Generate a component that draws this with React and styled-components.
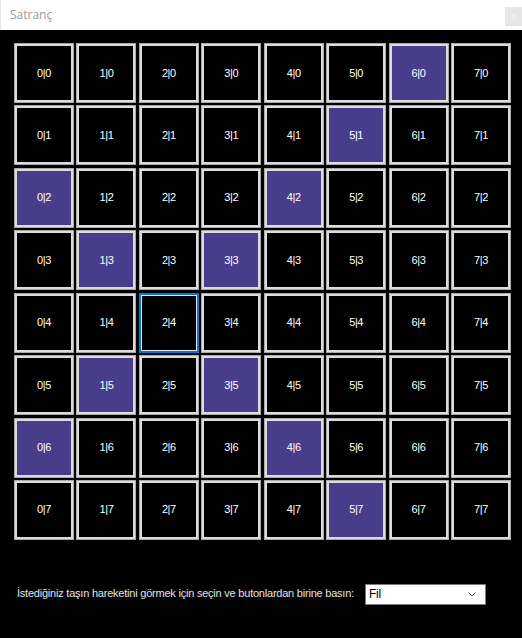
import React from "react";
import styled, { createGlobalStyle } from "styled-components";

const Global = createGlobalStyle`
  html, body { margin: 0; padding: 0; background: #000; }
  body { width: 522px; height: 638px; overflow: hidden; }
`;

const Window = styled.div`
  width: 522px;
  height: 638px;
  display: flex;
  flex-direction: column;
  background: #000;
`;

const TitleBar = styled.div`
  height: 30px;
  flex: none;
  background: #fff;
  display: flex;
  align-items: center;
  justify-content: space-between;
  padding-left: 9px;
  box-sizing: border-box;
  border-left: 1px solid #e8e8e8;
`;

const Title = styled.span`
  font-family: "Open Sans", "Noto Sans", sans-serif;
  font-size: 12px;
  color: #9a9a9a;
  margin-top: -1px;
`;

const CloseBox = styled.div`
  width: 17px;
  height: 19px;
  background: #e6e6e6;
  color: #f4f4f4;
  font-family: "Liberation Sans", sans-serif;
  font-size: 10px;
  display: flex;
  align-items: center;
  justify-content: center;
  align-self: flex-start;
  margin-top: 7px;
`;

const Content = styled.div`
  flex: 1;
  padding: 13px 0 0 14px;
  display: flex;
  flex-direction: column;
`;

const Board = styled.div`
  width: 497px;
  display: grid;
  grid-template-columns: repeat(8, 60px);
  grid-auto-rows: 60px;
  column-gap: 2.43px;
  row-gap: 2.43px;
`;

const Cell = styled.div`
  box-sizing: border-box;
  background: ${(p) => (p.$hl ? "#483d8b" : "#000")};
  border: ${(p) => (p.$focus ? "2px solid #0078d7" : "1px solid #a8a8a8")};
  box-shadow: ${(p) =>
    p.$focus ? "inset 0 0 0 1px #e8e8e8" : "inset 0 0 0 2px #dcdcdc"};
  display: flex;
  align-items: center;
  justify-content: center;
  font-family: "Liberation Sans", Arial, sans-serif;
  font-size: 11px;
  letter-spacing: -0.4px;
  color: #fff;
  padding-bottom: 1px;
`;

const Footer = styled.div`
  display: flex;
  align-items: center;
  margin-top: 44px;
  padding-left: 3px;
`;

const Prompt = styled.span`
  font-family: "Liberation Sans", Arial, sans-serif;
  font-size: 11px;
  letter-spacing: -0.22px;
  white-space: nowrap;
  color: #e4e4e4;
  width: 348px;
  flex: none;
  margin-top: -3px;
`;

const Select = styled.div`
  width: 121px;
  height: 21px;
  flex: none;
  box-sizing: border-box;
  background: #fff;
  border: 1px solid #7a7a7a;
  display: flex;
  align-items: center;
  justify-content: space-between;
  padding: 0 9px 0 3px;
  font-family: "Liberation Sans", Arial, sans-serif;
  font-size: 12px;
  letter-spacing: -0.3px;
  color: #000;
`;

const hl = new Set([
  "6,0", "5,1", "0,2", "4,2", "1,3", "3,3", "1,5", "3,5", "0,6", "4,6", "5,7",
]);

export default function App() {
  const cells = [];
  for (let r = 0; r < 8; r++) {
    for (let c = 0; c < 8; c++) {
      cells.push(
        <Cell key={`${c}-${r}`} $hl={hl.has(`${c},${r}`)} $focus={c === 2 && r === 4}>
          {c}|{r}
        </Cell>
      );
    }
  }
  return (
    <>
      <Global />
      <Window>
        <TitleBar>
          <Title>Satranç</Title>
          <CloseBox>x</CloseBox>
        </TitleBar>
        <Content>
          <Board>{cells}</Board>
          <Footer>
            <Prompt>İstediğiniz taşın hareketini görmek için seçin ve butonlardan birine basın:</Prompt>
            <Select>
              <span>Fil</span>
              <svg width="8" height="5" viewBox="0 0 8 5">
                <path d="M0.5 0.5 L4 4 L7.5 0.5" fill="none" stroke="#555" strokeWidth="1" />
              </svg>
            </Select>
          </Footer>
        </Content>
      </Window>
    </>
  );
}
